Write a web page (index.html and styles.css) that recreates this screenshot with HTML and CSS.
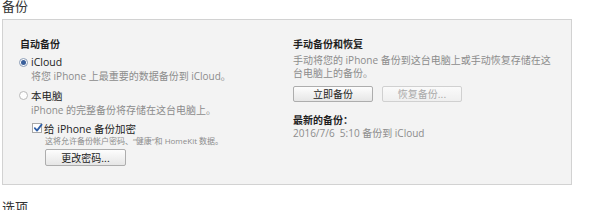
FILE: index.html
```html
<!DOCTYPE html>
<html lang="zh-CN">
<head>
<meta charset="utf-8">
<link rel="stylesheet" href="styles.css">
</head>
<body>
<h1 class="section-title">备份</h1>
<div class="panel">
  <div class="col col-left">
    <div class="heading">自动备份</div>
    <div class="option option-first">
      <span class="radio radio-on"></span>
      <span class="option-label">iCloud</span>
    </div>
    <div class="desc">将您 iPhone 上最重要的数据备份到 iCloud。</div>
    <div class="option option-second">
      <span class="radio"></span>
      <span class="option-label">本电脑</span>
    </div>
    <div class="desc desc-tight">iPhone 的完整备份将存储在这台电脑上。</div>
    <div class="check-row">
      <span class="checkbox">
        <svg viewBox="0 0 10 10" width="10" height="10"><path d="M1.8 5.2 L4 7.6 L8.6 1.6" fill="none" stroke="#2f5fa8" stroke-width="1.8" stroke-linecap="round" stroke-linejoin="round"/></svg>
      </span>
      <span class="check-label">给 iPhone 备份加密</span>
    </div>
    <div class="small">这将允许备份帐户密码、“健康”和 HomeKit 数据。</div>
    <div class="btn-row-left">
      <button class="btn">更改密码...</button>
    </div>
  </div>
  <div class="col col-right">
    <div class="heading">手动备份和恢复</div>
    <div class="desc desc-right">手动将您的 iPhone 备份到这台电脑上或手动恢复存储在这台电脑上的备份。</div>
    <div class="btn-row">
      <button class="btn">立即备份</button>
      <button class="btn btn-disabled">恢复备份...</button>
    </div>
    <div class="heading heading-latest">最新的备份：</div>
    <div class="desc date">2016/7/6&nbsp;&nbsp;5:10 备份到 iCloud</div>
  </div>
</div>
<h1 class="section-title section-next">选项</h1>
</body>
</html>
```
FILE: styles.css
```css
html, body {
  margin: 0;
  padding: 0;
  background: #ffffff;
}
body {
  padding-left: 2px;
  padding-right: 28px;
  font-family: "Open Sans", "Noto Sans CJK SC", sans-serif;
  color: #222222;
  font-size: 10px;
}
.section-title {
  margin: 0;
  font-family: "Noto Sans CJK SC", sans-serif;
  font-weight: normal;
  font-size: 13px;
  line-height: 12px;
  color: #333333;
}
.panel {
  margin-top: 7px;
  height: 164px;
  box-sizing: border-box;
  height: 166px;
  border: 1px solid #d2d2d2;
  background: #f3f3f3;
  display: grid;
  grid-template-columns: 273px 1fr;
  padding: 17px 0 0 17px;
}
.section-next {
  margin-top: 16px;
}
.heading {
  font-family: "Noto Sans CJK SC", sans-serif;
  font-weight: bold;
  font-size: 10px;
  line-height: 14px;
  color: #1e1e1e;
}
.option {
  display: flex;
  align-items: center;
  height: 14px;
  font-family: "Open Sans", "Noto Sans CJK SC", sans-serif;
  font-size: 10.5px;
  color: #222222;
}
.option-first { margin-top: 4px; }
.option-second { margin-top: 5px; }
.radio {
  width: 7px;
  height: 7px;
  border: 1px solid #b9b9b9;
  border-radius: 50%;
  background: #fdfdfd;
  margin-left: -1px;
  margin-right: 3px;
  display: inline-flex;
  align-items: center;
  justify-content: center;
}
.radio-on {
  border-color: #8a9bb5;
}
.radio-on::after {
  content: "";
  width: 5px;
  height: 5px;
  border-radius: 50%;
  background: #3a5f9a;
}
.desc {
  font-family: "Open Sans", "Noto Sans CJK SC", sans-serif;
  font-size: 10px;
  line-height: 14px;
  color: #8c8c8c;
  padding-left: 11px;
  white-space: nowrap;
}
.desc-tight { margin-top: 1px; }
.check-row {
  display: flex;
  align-items: center;
  height: 14px;
  margin-top: 4px;
  padding-left: 12px;
}
.checkbox {
  width: 8px;
  height: 8px;
  border: 1px solid #a8a8a8;
  background: #ffffff;
  margin-right: 2px;
  position: relative;
}
.checkbox svg {
  position: absolute;
  left: 0;
  top: -1px;
}
.check-label {
  font-family: "Open Sans", "Noto Sans CJK SC", sans-serif;
  font-size: 10.5px;
  color: #222222;
}
.small {
  font-family: "Open Sans", "Noto Sans CJK SC", sans-serif;
  font-size: 8px;
  line-height: 12px;
  color: #8c8c8c;
  padding-left: 25px;
  white-space: nowrap;
}
.btn-row-left {
  margin-top: 2px;
  padding-left: 25px;
}
.btn {
  width: 81px;
  height: 17px;
  box-sizing: border-box;
  border: 1px solid #adadad;
  border-radius: 2px;
  background: linear-gradient(#fdfdfd, #e6e6e6);
  font-family: "Noto Sans CJK SC", sans-serif;
  font-size: 10px;
  line-height: 14px;
  color: #222222;
  padding: 0;
  margin: 0;
}
.btn-disabled {
  color: #a9a9a9;
  border-color: #d0d0d0;
  background: linear-gradient(#fafafa, #efefef);
}
.desc-right {
  white-space: normal;
  padding-left: 0;
  line-height: 13px;
  margin-top: 3px;
  width: 258px;
}
.btn-row {
  display: flex;
  gap: 9px;
  margin-top: 6px;
}
.btn-row .btn {
  width: 80px;
  height: 16px;
}
.heading-latest {
  margin-top: 11px;
}
.date {
  padding-left: 0;
  line-height: 12px;
}
```
